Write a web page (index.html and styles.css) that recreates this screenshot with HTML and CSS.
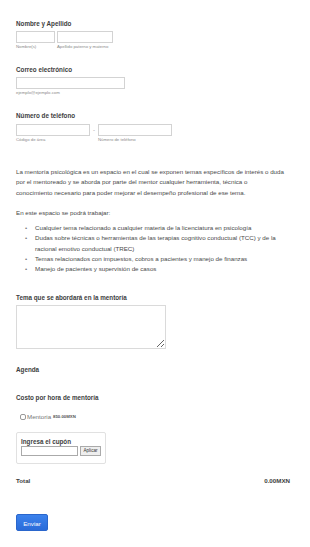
FILE: index.html
```html
<!DOCTYPE html>
<html lang="es">
<head>
<meta charset="utf-8">
<title>Mentoría psicológica</title>
<link rel="stylesheet" href="styles.css">
</head>
<body>
<div id="wrap">
	<div class="field f-name">
		<p class="label">Nombre y Apellido</p>
		<div class="row">
			<div class="sub">
				<input class="txt w-first" type="text">
				<span class="hint">Nombre(s)</span>
			</div>
			<div class="sub">
				<input class="txt w-last" type="text">
				<span class="hint">Apellido paterno y materno</span>
			</div>
		</div>
	</div>

	<div class="field f-mail">
		<p class="label">Correo electrónico</p>
		<input class="txt w-mail" type="text">
		<span class="hint">ejemplo@ejemplo.com</span>
	</div>

	<div class="field f-phone">
		<p class="label">Número de teléfono</p>
		<div class="row">
			<div class="sub">
				<input class="txt w-phone" type="text">
				<span class="hint">Código de área</span>
			</div>
			<span class="dash">-</span>
			<div class="sub">
				<input class="txt w-phone" type="text">
				<span class="hint">Número de teléfono</span>
			</div>
		</div>
	</div>

	<div class="text">
		<p>La mentoría psicológica es un espacio en el cual se exponen temas específicos de interés o duda por el mentoreado y se aborda por parte del mentor cualquier herramienta, técnica o<br>conocimiento necesario para poder mejorar el desempeño profesional de ese tema.</p>
		<p class="intro">En este espacio se podrá trabajar:</p>
		<ul>
			<li>Cualquier tema relacionado a cualquier materia de la licenciatura en psicología</li>
			<li>Dudas sobre técnicas o herramientas de las terapias cognitivo conductual (TCC) y de la racional emotivo conductual (TREC)</li>
			<li>Temas relacionados con impuestos, cobros a pacientes y manejo de finanzas</li>
			<li>Manejo de pacientes y supervisión de casos</li>
		</ul>
	</div>

	<div class="field f-topic">
		<p class="label">Tema que se abordará en la mentoría</p>
		<textarea class="area"></textarea>
	</div>

	<div class="field f-agenda">
		<p class="label">Agenda</p>
	</div>

	<div class="field f-cost">
		<p class="label">Costo por hora de mentoría</p>
		<label class="check"><span class="box"></span>Mentoria <b>850.00MXN</b></label>
		<div class="coupon">
			<p class="label">Ingresa el cupón</p>
			<div class="coupon-row">
				<input class="txt w-coupon" type="text">
				<span class="apply">Aplicar</span>
			</div>
		</div>
	</div>

	<div class="total">
		<span>Total</span>
		<span>0.00MXN</span>
	</div>

	<span class="send">Enviar</span>
</div>
</body>
</html>
```

FILE: styles.css
```css
body, div, p, ul, li, input, textarea{margin:0; padding:0;}
body{background:#fff; font-family:"Liberation Sans", Arial, sans-serif; color:#4a4a4a;}
ul{list-style:none;}

#wrap{padding:20px 20px 0 16px;}

.label{font-size:6.3px; line-height:8px; font-weight:bold; color:#3d3d3d;}
.row{display:flex; align-items:flex-start; gap:2px;}
.sub{display:flex; flex-direction:column;}
.hint{display:block; font-size:4.3px; line-height:7px; color:#8a8a8a;}
.dash{font-size:6px; line-height:12px; color:#999; width:4px; text-align:center;}

.txt{height:12px; border:1px solid #d3d3d3; box-sizing:border-box; background:#fff; outline:none; display:block;}
.w-first{width:39px;}
.w-last{width:56px;}
.w-mail{width:109px;}
.w-phone{width:74px;}
.w-coupon{width:57px; height:10px; border-color:#aaa;}

.field .label{margin-bottom:3px;}
.f-mail{margin-top:16px;}
.f-phone{margin-top:16px;}
.f-phone .label{margin-bottom:4px;}

.text{margin-top:24px; font-size:6.2px; line-height:10.3px; width:270px;}
.text .intro{margin-top:10px;}
.text ul{margin-top:5px; padding-left:19px;}
.text li{position:relative;}
.text li:before{content:"\2022"; position:absolute; left:-10px; color:#777;}

.f-topic{margin-top:19px;}
.f-topic .label{margin-bottom:3px;}
.area{display:block; width:150px; height:44px; border:1px solid #dadada; box-sizing:border-box; resize:vertical;}

.f-agenda{margin-top:17px;}
.f-cost{margin-top:20px;}
.f-cost > .label{margin-bottom:11px;}

.check{display:flex; align-items:center; font-size:6.2px; line-height:8px; color:#777; padding-left:4px;}
.check .box{width:6px; height:6px; border:1px solid #999; border-radius:2px; box-sizing:border-box; margin-right:1px;}
.check b{font-size:4.3px; margin-left:2px; color:#555;}

.coupon{width:90px; margin-top:11px; border:1px solid #e1e1e1; border-radius:2px; box-sizing:border-box; padding:5px 4px 7px;}
.coupon .label{margin-bottom:0;}
.coupon-row{display:flex; gap:2px; align-items:center;}
.apply{font-size:4.6px; line-height:8px; height:10px; box-sizing:border-box; padding:0 2px; border:1px solid #aaa; background:#eee; color:#333; width:25px; text-align:center;}

.total{display:flex; justify-content:space-between; margin-top:13px; font-size:6.2px; line-height:8px; font-weight:bold; color:#3d3d3d;}

.send{display:inline-block; margin-top:29px; width:32px; height:17px; line-height:17px; text-align:center; font-size:6.2px; color:#fff; background:linear-gradient(#3b82ec, #2a6bd9); border:1px solid #2a66cc; border-radius:2px; box-sizing:border-box;}
```
